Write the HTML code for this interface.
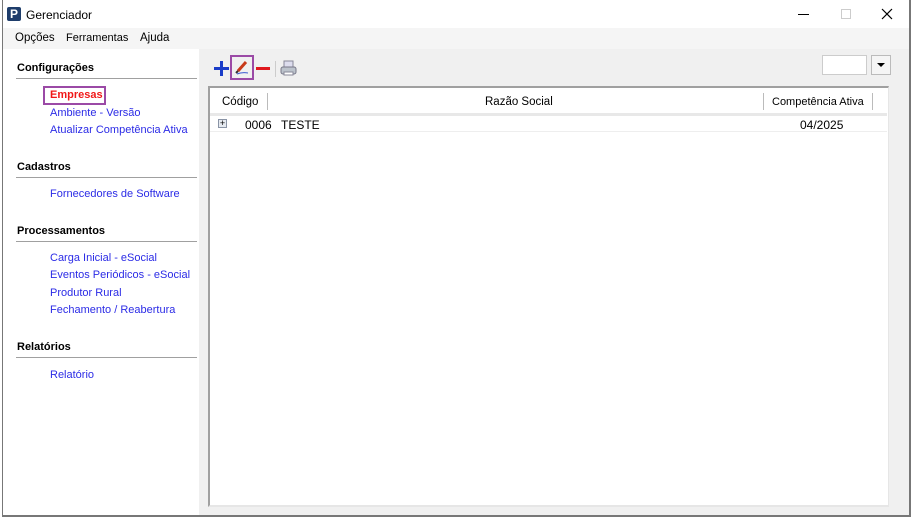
<!DOCTYPE html>
<html><head><meta charset="utf-8"><style>
*{margin:0;padding:0;box-sizing:border-box}
body{width:913px;height:519px;background:#fff;font-family:"Liberation Sans",sans-serif;font-size:11px;color:#000;position:relative;overflow:hidden}
.a{position:absolute;white-space:nowrap}
.lk{color:#2b2be6;font-size:11px}
.h{font-weight:bold;font-size:11px}
.hr{position:absolute;left:16px;width:181px;height:1px;background:#a0a0a0}
</style></head><body>
<div class="a" style="left:2px;top:0;width:1px;height:517px;background:#777"></div>
<div class="a" style="left:909px;top:0;width:2px;height:517px;background:#777"></div>
<div class="a" style="left:2px;top:515px;width:909px;height:2px;background:#777"></div>
<!-- title -->
<div class="a" style="left:7px;top:7px;width:14px;height:14px;background:#1e3d6b;border-radius:2px;color:#fff;font-weight:bold;font-size:12px;line-height:14px;text-align:center">P</div>
<div class="a" style="left:26px;top:8px;font-size:12px">Gerenciador</div>
<div class="a" style="left:798px;top:14px;width:11px;height:1px;background:#000"></div>
<div class="a" style="left:841px;top:9px;width:10px;height:10px;border:1px solid #ccc"></div>
<svg class="a" style="left:881px;top:8px" width="12" height="12"><path d="M1 1L11 11M11 1L1 11" stroke="#000" stroke-width="1.2"/></svg>
<!-- menu -->
<div class="a" style="left:3px;top:28px;width:906px;height:21px;background:#f5f5f5"></div>
<div class="a" style="left:15px;top:32px;font-size:11.5px">Opções</div>
<div class="a" style="left:66px;top:32px;font-size:11px">Ferramentas</div>
<div class="a" style="left:140px;top:32px;font-size:11.5px">Ajuda</div>
<!-- left panel -->
<div class="a h" style="left:17px;top:62px">Configurações</div>
<div class="hr" style="top:78px"></div>
<div class="a" style="left:43px;top:86px;width:63px;height:19px;border:2px solid #9b4aa6"></div>
<div class="a h" style="left:50px;top:89px;color:#f01818">Empresas</div>
<div class="a lk" style="left:50px;top:107px">Ambiente - Versão</div>
<div class="a lk" style="left:50px;top:124px">Atualizar Competência Ativa</div>
<div class="a h" style="left:17px;top:161px">Cadastros</div>
<div class="hr" style="top:177px"></div>
<div class="a lk" style="left:50px;top:188px">Fornecedores de Software</div>
<div class="a h" style="left:17px;top:225px">Processamentos</div>
<div class="hr" style="top:241px"></div>
<div class="a lk" style="left:50px;top:252px">Carga Inicial - eSocial</div>
<div class="a lk" style="left:50px;top:269px">Eventos Periódicos - eSocial</div>
<div class="a lk" style="left:50px;top:287px">Produtor Rural</div>
<div class="a lk" style="left:50px;top:304px">Fechamento / Reabertura</div>
<div class="a h" style="left:17px;top:341px">Relatórios</div>
<div class="hr" style="top:357px"></div>
<div class="a lk" style="left:50px;top:369px">Relatório</div>
<!-- content -->
<div class="a" style="left:199px;top:49px;width:710px;height:466px;background:#f0f0f0"></div>
<svg class="a" style="left:214px;top:61px" width="15" height="15"><path d="M7.5 0V15M0 7.5H15" stroke="#1a3cc8" stroke-width="3"/></svg>
<div class="a" style="left:230px;top:55px;width:24px;height:25px;border:2px solid #9b4aa6"></div>
<svg class="a" style="left:234px;top:59px" width="17" height="17"><path d="M4 12L12 3" stroke="#c83a1a" stroke-width="3"/><path d="M2 14L4 12" stroke="#333" stroke-width="2"/><path d="M3 15Q8 13 14 14" stroke="#3a5ad0" stroke-width="1" fill="none"/></svg>
<div class="a" style="left:256px;top:67px;width:14px;height:3px;background:#e0181e"></div>
<div class="a" style="left:275px;top:61px;width:1px;height:16px;background:#ccc"></div>
<svg class="a" style="left:280px;top:60px" width="17" height="17"><rect x="4" y="1" width="9" height="6" fill="#dde" stroke="#889"/><rect x="1" y="7" width="15" height="7" rx="2" fill="#bcc3cc" stroke="#778"/><rect x="4" y="12" width="9" height="3" fill="#fff" stroke="#889"/></svg>
<div class="a" style="left:822px;top:55px;width:45px;height:20px;background:#fff;border:1px solid #ccc"></div>
<div class="a" style="left:871px;top:55px;width:20px;height:20px;background:#f5f5f5;border:1px solid #bbb"></div>
<svg class="a" style="left:877px;top:63px" width="9" height="5"><path d="M0 0H8L4 4Z" fill="#000"/></svg>
<!-- grid -->
<div class="a" style="left:208px;top:86px;width:681px;height:421px;background:#fff;border-left:2px solid #a0a0a0;border-top:2px solid #a0a0a0;border-right:1px solid #e6e6e6;border-bottom:2px solid #e6e6e6"></div>
<div class="a" style="left:210px;top:113px;width:677px;height:3px;background:#e8e8e8"></div>
<div class="a" style="left:222px;top:96px;font-size:11.5px">Código</div>
<div class="a" style="left:267px;top:93px;width:1px;height:17px;background:#bbb"></div>
<div class="a" style="left:485px;top:96px;font-size:11.5px">Razão Social</div>
<div class="a" style="left:763px;top:93px;width:1px;height:17px;background:#bbb"></div>
<div class="a" style="left:772px;top:96px;font-size:11px">Competência Ativa</div>
<div class="a" style="left:872px;top:93px;width:1px;height:17px;background:#bbb"></div>
<div class="a" style="left:218px;top:119px;width:9px;height:9px;border:1px solid #8a94a6;background:#e6eaf0;font-size:9px;line-height:7px;text-align:center">+</div>
<div class="a" style="left:245px;top:118px;font-size:12px">0006</div>
<div class="a" style="left:281px;top:118px;font-size:12px">TESTE</div>
<div class="a" style="left:800px;top:118px;font-size:12px">04/2025</div>
<div class="a" style="left:210px;top:131px;width:677px;height:1px;background:#eee"></div>
</body></html>
